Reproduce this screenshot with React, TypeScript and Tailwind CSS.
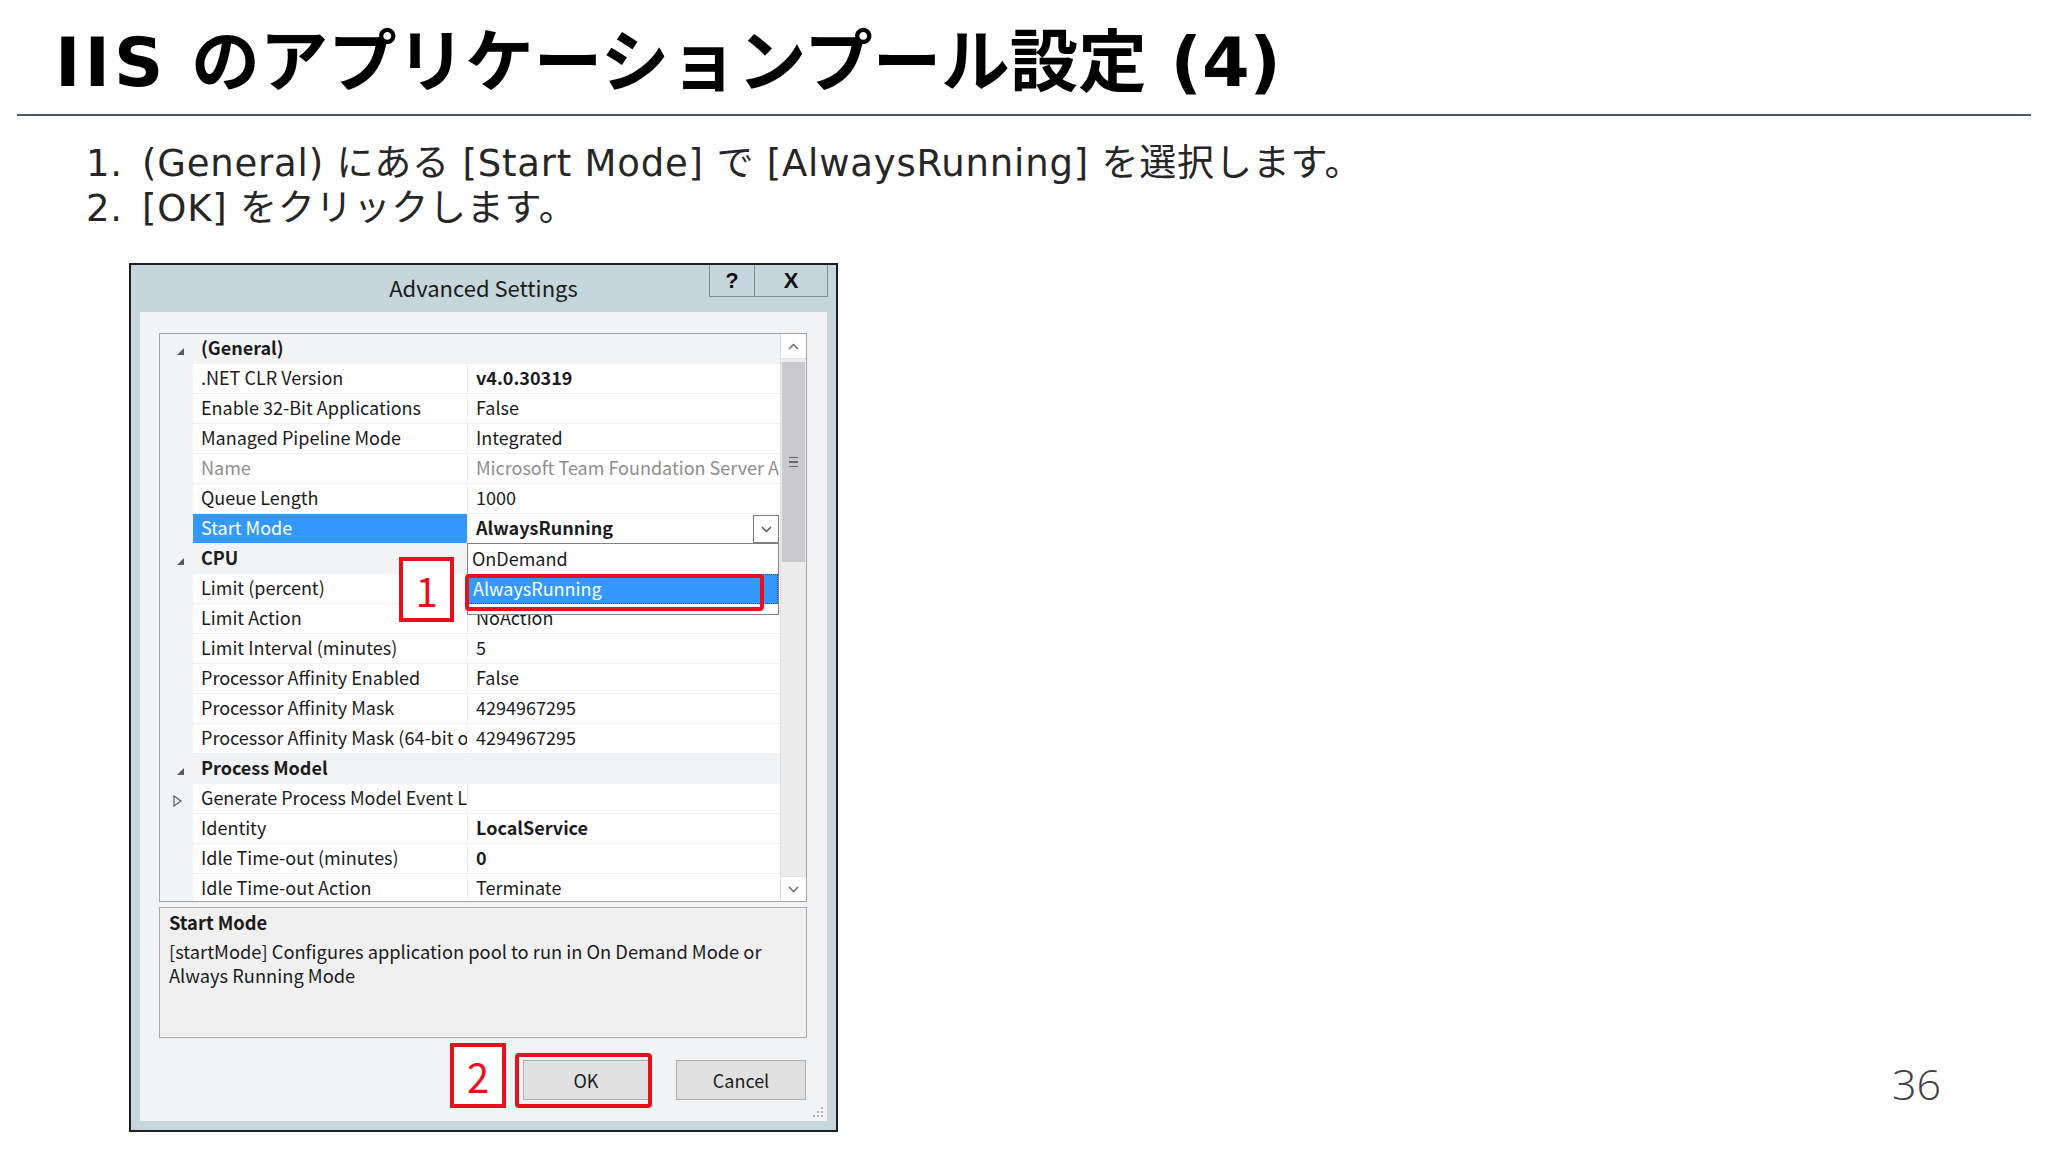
import React from "react";

type Row = {
  type?: "cat";
  label: string;
  value?: string;
  bold?: boolean;
  gray?: boolean;
  selected?: boolean;
  collapsed?: boolean;
};

const rows: Row[] = [
  { type: "cat", label: "(General)" },
  { label: ".NET CLR Version", value: "v4.0.30319", bold: true },
  { label: "Enable 32-Bit Applications", value: "False" },
  { label: "Managed Pipeline Mode", value: "Integrated" },
  { label: "Name", value: "Microsoft Team Foundation Server Application Pool", gray: true },
  { label: "Queue Length", value: "1000" },
  { label: "Start Mode", value: "AlwaysRunning", bold: true, selected: true },
  { type: "cat", label: "CPU" },
  { label: "Limit (percent)", value: "0" },
  { label: "Limit Action", value: "NoAction" },
  { label: "Limit Interval (minutes)", value: "5" },
  { label: "Processor Affinity Enabled", value: "False" },
  { label: "Processor Affinity Mask", value: "4294967295" },
  { label: "Processor Affinity Mask (64-bit option)", value: "4294967295" },
  { type: "cat", label: "Process Model" },
  { label: "Generate Process Model Event Log Entry", value: "", collapsed: true },
  { label: "Identity", value: "LocalService", bold: true },
  { label: "Idle Time-out (minutes)", value: "0", bold: true },
  { label: "Idle Time-out Action", value: "Terminate" },
];

function Expanded() {
  return (
    <svg width="7" height="7" viewBox="0 0 7 7" className="block">
      <polygon points="7,0 7,7 0,7" fill="#5a5a5a" />
    </svg>
  );
}

function Collapsed() {
  return (
    <svg width="9" height="12" viewBox="0 0 9 12" className="block">
      <polygon points="1,1 8,6 1,11" fill="none" stroke="#5a5a5a" strokeWidth="1.2" />
    </svg>
  );
}

function ChevronUp() {
  return (
    <svg width="11" height="7" viewBox="0 0 11 7" className="block">
      <polyline points="1,6 5.5,1.5 10,6" fill="none" stroke="#6b6b6b" strokeWidth="1.5" />
    </svg>
  );
}

function ChevronDown({ color = "#6b6b6b" }: { color?: string }) {
  return (
    <svg width="11" height="7" viewBox="0 0 11 7" className="block">
      <polyline points="1,1 5.5,5.5 10,1" fill="none" stroke={color} strokeWidth="1.5" />
    </svg>
  );
}

function PropRow({ r }: { r: Row }) {
  if (r.type === "cat") {
    return (
      <div className="flex h-[30px] bg-[#f2f3f5]">
        <div className="w-[33px] shrink-0 flex items-center">
          <div className="ml-[17px] mt-[4px]">
            <Expanded />
          </div>
        </div>
        <div className="flex-1 pl-[8px] leading-[27px] font-bold text-[#1b1b1b] whitespace-nowrap">{r.label}</div>
      </div>
    );
  }
  return (
    <div className="flex h-[30px]">
      <div className="w-[33px] shrink-0 bg-[#f2f3f5] flex items-center">
        {r.collapsed && (
          <div className="ml-[13px] mt-[3px]">
            <Collapsed />
          </div>
        )}
      </div>
      <div
        className={
          "w-[275px] shrink-0 pl-[8px] leading-[27px] whitespace-nowrap overflow-hidden border-b border-r border-[#f0f0f0] " +
          (r.selected ? "bg-[#3399ff] text-white" : r.gray ? "bg-white text-[#8e8e8e]" : "bg-white text-[#1b1b1b]")
        }
      >
        {r.label}
      </div>
      <div
        className={
          "relative flex-1 pl-[8px] leading-[27px] whitespace-nowrap overflow-hidden bg-white border-b border-[#f0f0f0] " +
          (r.bold ? "font-bold " : "") +
          (r.gray ? "text-[#8e8e8e]" : "text-[#1b1b1b]")
        }
      >
        {r.value}
      </div>
    </div>
  );
}

function Dialog() {
  return (
    <div className="relative w-[709px] h-[869px] shrink-0 border-2 border-[#1e1e1e] bg-[#c5d7dd] flex flex-col [font-family:'Noto_Sans_CJK_JP',sans-serif] text-[18px]">
      {/* title bar */}
      <div className="relative h-[47px] shrink-0 flex items-center justify-center">
        <span className="text-[22px] leading-none text-[#1b1b1b] mt-[-3px]">Advanced Settings</span>
        <div className="absolute right-[8px] top-0 flex h-[32px] border-l border-b border-[#7d8e94]">
          <div className="w-[45px] flex items-center justify-center border-r border-[#7d8e94] [font-family:'Liberation_Sans',sans-serif] font-bold text-[22px] text-[#111]">?</div>
          <div className="w-[73px] flex items-center justify-center border-r border-[#7d8e94] [font-family:'Liberation_Sans',sans-serif] font-bold text-[22px] text-[#111]">X</div>
        </div>
      </div>

      {/* inner area */}
      <div className="relative flex-1 mx-[9px] mb-[9px] bg-[#f1f3f4] pt-[21px] pl-[19px] pr-[20px] flex flex-col">
        {/* property grid */}
        <div className="h-[569px] shrink-0 border border-[#a3a3a3] bg-white flex">
          <div className="relative w-[620px] overflow-hidden">
            {rows.map((r, i) => (
              <PropRow key={i} r={r} />
            ))}
            {/* combo button on Start Mode row */}
            <div className="absolute left-[593px] top-[181px] w-[26px] h-[28px] border border-[#7a7a7a] bg-white flex items-center justify-center">
              <ChevronDown color="#555" />
            </div>
            {/* dropdown list */}
            <div className="absolute left-[307px] top-[209px] w-[312px] h-[72px] border border-[#828282] bg-white">
              <div className="h-[30px] pl-[4px] leading-[28px] text-[#1b1b1b]">OnDemand</div>
              <div className="h-[30px] pl-[4px] leading-[26px] bg-[#3399ff] text-white border border-dotted border-[#1a4f8a]">AlwaysRunning</div>
            </div>
          </div>
          {/* scrollbar */}
          <div className="flex-1 bg-[#ececec] border-l border-[#dcdcdc] flex flex-col">
            <div className="h-[25px] bg-white flex items-center justify-center border-b border-[#e2e2e2]">
              <ChevronUp />
            </div>
            <div className="mt-[3px] mx-[1px] h-[200px] bg-[#c9c9cb] flex flex-col items-center justify-center gap-[3px]">
              <div className="w-[9px] h-[1.5px] bg-[#666]" />
              <div className="w-[9px] h-[1.5px] bg-[#666]" />
              <div className="w-[9px] h-[1.5px] bg-[#666]" />
            </div>
            <div className="flex-1" />
            <div className="h-[25px] bg-white flex items-center justify-center border-t border-[#e2e2e2]">
              <ChevronDown />
            </div>
          </div>
        </div>

        {/* description */}
        <div className="mt-[5px] h-[131px] shrink-0 border border-[#a9a9a9] bg-[#f0f0f0] px-[9px] pt-[2px] text-[18.3px] text-[#1b1b1b] whitespace-nowrap">
          <div className="font-bold leading-[24px]">Start Mode</div>
          <div className="mt-[5px] leading-[24px]">
            [startMode] Configures application pool to run in On Demand Mode or
            <br />
            Always Running Mode
          </div>
        </div>

        {/* buttons */}
        <div className="mt-[22px] flex justify-end gap-[27px] mr-[1px]">
          <div className="w-[126px] h-[40px] border border-[#adadad] bg-[#e1e1e1] flex items-center justify-center text-[#1b1b1b]">OK</div>
          <div className="w-[130px] h-[40px] border border-[#adadad] bg-[#e1e1e1] flex items-center justify-center text-[#1b1b1b]">Cancel</div>
        </div>

        {/* resize grip */}
        <svg width="12" height="12" viewBox="0 0 12 12" className="absolute right-[3px] bottom-[3px]">
          <rect x="9" y="1" width="2" height="2" fill="#b5b5b5" />
          <rect x="5" y="5" width="2" height="2" fill="#b5b5b5" />
          <rect x="9" y="5" width="2" height="2" fill="#b5b5b5" />
          <rect x="1" y="9" width="2" height="2" fill="#b5b5b5" />
          <rect x="5" y="9" width="2" height="2" fill="#b5b5b5" />
          <rect x="9" y="9" width="2" height="2" fill="#b5b5b5" />
        </svg>
      </div>

      {/* annotations */}
      <div className="absolute left-[334px] top-[309px] w-[299px] h-[37px] border-[4px] border-[#e8101a] rounded-[4px]" />
      <div className="absolute left-[268px] top-[292px] w-[55px] h-[65px] border-[4px] border-[#e8101a] bg-white flex items-center justify-center text-[#e8101a] text-[40px] leading-none">
        1
      </div>
      <div className="absolute left-[319px] top-[778px] w-[56px] h-[65px] border-[4px] border-[#e8101a] bg-white flex items-center justify-center text-[#e8101a] text-[40px] leading-none">
        2
      </div>
      <div className="absolute left-[384px] top-[788px] w-[137px] h-[55px] border-[4px] border-[#e8101a] rounded-[4px]" />
    </div>
  );
}

export default function App() {
  return (
    <div className="w-[2048px] h-[1152px] bg-white overflow-hidden flex flex-col">
      <h1 className="h-[114px] shrink-0 pl-[55px] pt-[28px] text-[68.5px] leading-none font-bold text-black whitespace-nowrap [font-family:'DejaVu_Sans','Noto_Sans_CJK_JP',sans-serif]">
        <span className="tracking-[4px]">IIS</span> のアプリケーションプール設定 (4)
      </h1>
      <div className="mx-[17px] h-[2px] shrink-0 bg-[#44587a]" />
      <ol className="mt-[25px] pl-[86px] text-[37px] leading-[45px] tracking-[0.8px] text-[#262626] whitespace-nowrap [font-family:'DejaVu_Sans','Noto_Sans_CJK_JP',sans-serif]">
        <li className="flex">
          <span className="w-[56px] shrink-0">1.</span>
          <span>(General) にある [Start Mode] で [AlwaysRunning] を選択します。</span>
        </li>
        <li className="flex">
          <span className="w-[56px] shrink-0">2.</span>
          <span>[OK] をクリックします。</span>
        </li>
      </ol>
      <div className="mt-[32px] flex flex-1">
        <div className="ml-[129px]">
          <Dialog />
        </div>
        <div className="flex-1 flex justify-end items-start pr-[107px] pt-[799px]">
          <span className="text-[43px] leading-none font-light text-[#404040] [font-family:'Open_Sans',sans-serif]">36</span>
        </div>
      </div>
    </div>
  );
}
